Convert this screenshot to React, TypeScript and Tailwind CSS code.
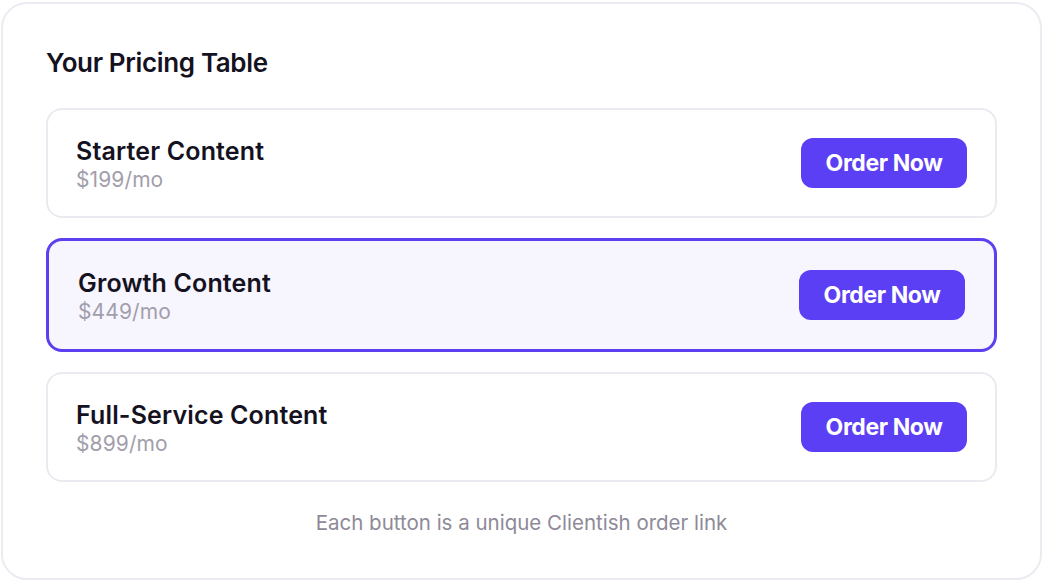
const plans = [
	{ name: 'Starter Content', price: '$199/mo', featured: false },
	{ name: 'Growth Content', price: '$449/mo', featured: true },
	{ name: 'Full-Service Content', price: '$899/mo', featured: false },
];

function PlanRow({ name, price, featured }: { name: string; price: string; featured: boolean }) {
	return (
		<div
			className={
				featured
					? 'flex items-center justify-between h-[114px] rounded-[16px] border-[3px] border-[#5b40f2] bg-[#f7f5fe] pl-[29px] pr-[29px]'
					: 'flex items-center justify-between h-[110px] rounded-[16px] border-2 border-[#ebeaf1] bg-white pl-[28px] pr-[28px]'
			}
		>
			<div className="flex flex-col pt-[6px]">
				<span className="text-[25px] leading-[28px] font-semibold text-[#15121f] tracking-[0.15px]">{name}</span>
				<span className="text-[21px] leading-[30px] text-[#a29eab] tracking-[0.1px]">{price}</span>
			</div>
			<button className="w-[166px] h-[50px] rounded-[12px] bg-[#5b3ff5] text-white text-[23px] font-bold tracking-[-0.4px] pt-px">
				Order Now
			</button>
		</div>
	);
}

export default function App() {
	return (
		<div className="w-[1044px] h-[582px] bg-white pl-px pr-[2px] pt-[2px] pb-[2px]" style={{ fontFamily: 'Inter, "Noto Sans", sans-serif' }}>
			<div className="h-full rounded-[26px] border-2 border-[#ecebf2] px-[43px] pt-[42px]">
				<h1 className="text-[26px] leading-[34px] font-semibold text-[#15121f] tracking-[-0.35px]">Your Pricing Table</h1>
				<div className="mt-[28px] flex flex-col gap-[20px]">
					{plans.map((p) => (
						<PlanRow key={p.name} {...p} />
					))}
				</div>
				<p className="mt-[27px] text-center text-[20.5px] leading-[28px] text-[#8e8a98]">
					Each button is a unique Clientish order link
				</p>
			</div>
		</div>
	);
}
